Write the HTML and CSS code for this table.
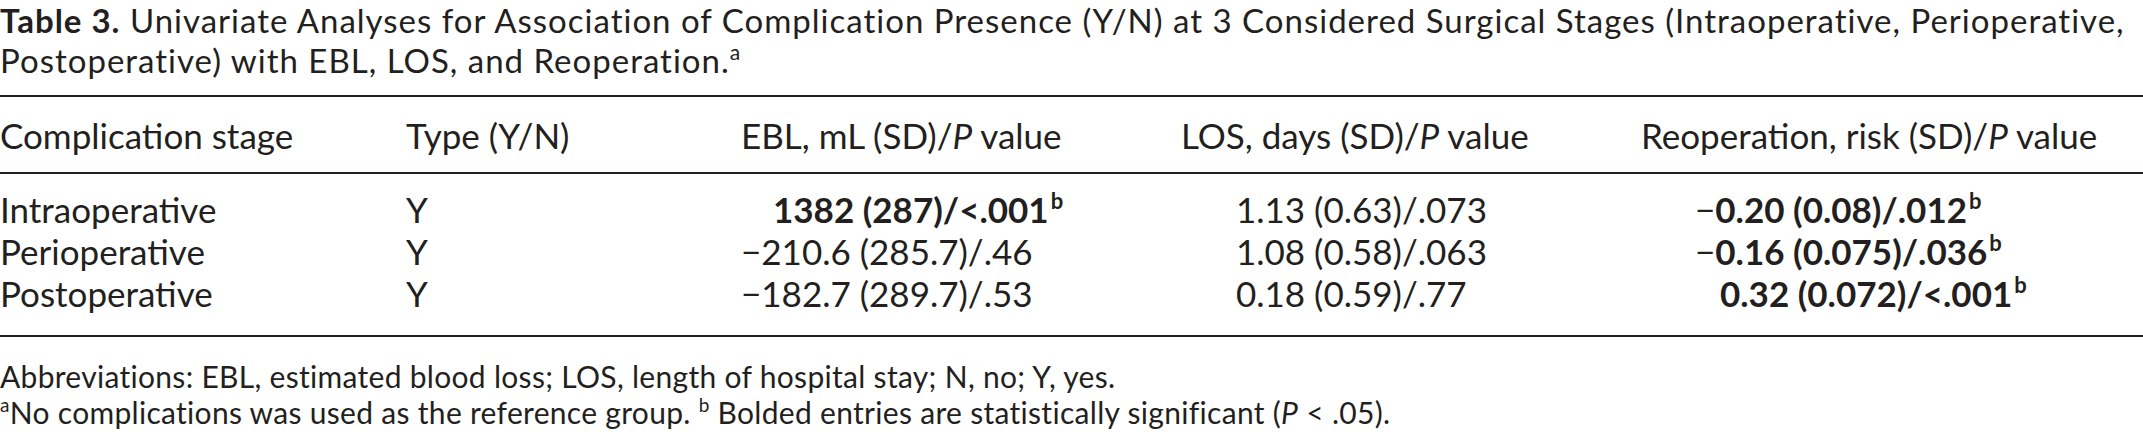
FILE: index.html
```html
<!DOCTYPE html>
<html lang="en">
<head>
<meta charset="utf-8">
<title>Table 3</title>
<link rel="stylesheet" href="styles.css">
</head>
<body>
<div class="page">
  <p class="caption"><span class="label">Table 3.</span> Univariate Analyses for Association of Complication Presence (Y/N) at 3 Considered Surgical Stages (Intraoperative, Perioperative,<br>Postoperative) with EBL, LOS, and Reoperation.<sup class="cap-sup">a</sup></p>
  <table class="data">
    <colgroup>
      <col class="c1"><col class="c2"><col class="c3"><col class="c4"><col class="c5">
    </colgroup>
    <thead>
      <tr>
        <th>Complication stage</th>
        <th>Type (Y/N)</th>
        <th>EBL, mL (SD)/<i>P</i> value</th>
        <th>LOS, days (SD)/<i>P</i> value</th>
        <th>Reoperation, risk (SD)/<i>P</i> value</th>
      </tr>
    </thead>
    <tbody>
      <tr>
        <td>Intraoperative</td>
        <td>Y</td>
        <td><span class="ind-ebl"><b>1382 (287)/&lt;.001</b><sup>b</sup></span></td>
        <td><span class="ind-los">1.13 (0.63)/.073</span></td>
        <td><span class="ind-reo">&minus;<b>0.20 (0.08)/.012</b><sup>b</sup></span></td>
      </tr>
      <tr>
        <td>Perioperative</td>
        <td>Y</td>
        <td>&minus;210.6 (285.7)/.46</td>
        <td><span class="ind-los">1.08 (0.58)/.063</span></td>
        <td><span class="ind-reo">&minus;<b>0.16 (0.075)/.036</b><sup>b</sup></span></td>
      </tr>
      <tr>
        <td>Postoperative</td>
        <td>Y</td>
        <td>&minus;182.7 (289.7)/.53</td>
        <td><span class="ind-los">0.18 (0.59)/.77</span></td>
        <td><span class="ind-pos"><b>0.32 (0.072)/&lt;.001</b><sup>b</sup></span></td>
      </tr>
    </tbody>
  </table>
  <div class="notes">
    <p>Abbreviations: EBL, estimated blood loss; LOS, length of hospital stay; N, no; Y, yes.</p>
    <p><sup>a</sup>No complications was used as the reference group. <sup>b</sup> Bolded entries are statistically significant (<i>P</i> &lt; .05).</p>
  </div>
</div>
</body>
</html>
```

FILE: styles.css
```css
html, body {
  margin: 0;
  padding: 0;
  background: #ffffff;
}

body {
  font-family: "Lato", "Open Sans", sans-serif;
  color: #231f20;
  font-size: 35px;
}

.page {
  width: 2143px;
  overflow: hidden;
}

.caption {
  margin: 0;
  line-height: 40px;
  font-size: 33px;
  letter-spacing: 1px;
  white-space: nowrap;
}

.caption .label {
  font-weight: 700;
}

.cap-sup {
  font-size: 21px;
  vertical-align: 13px;
  line-height: 0;
}

.data {
  width: 100%;
  border-collapse: collapse;
  table-layout: fixed;
  margin-top: 15px;
  border-top: 2px solid #231f20;
  border-bottom: 2px solid #231f20;
}

.c1 { width: 406px; }
.c2 { width: 335px; }
.c3 { width: 440px; }
.c4 { width: 460px; }
.c5 { width: auto; }

.data th {
  font-weight: 400;
  text-align: left;
  padding: 0;
  height: 75px;
  line-height: 42px;
  border-bottom: 2px solid #231f20;
  white-space: nowrap;
}

.data td {
  padding: 0;
  height: 42px;
  line-height: 42px;
  white-space: nowrap;
}

.data tbody tr:first-child td {
  padding-top: 14px;
}

.data tbody tr:last-child td {
  padding-bottom: 21px;
}

.data b {
  font-weight: 700;
}

.data sup {
  font-size: 22px;
  vertical-align: 14px;
  line-height: 0;
  font-weight: 700;
  margin-left: 2px;
}

.ind-ebl { padding-left: 32px; }
.ind-los { padding-left: 55px; }
.ind-reo { padding-left: 54px; }
.ind-pos { padding-left: 79px; }

.notes {
  margin-top: 21px;
}

.notes p {
  margin: 0;
  line-height: 36px;
  font-size: 30px;
  letter-spacing: 0.3px;
  white-space: nowrap;
}

.notes sup {
  font-size: 19px;
  vertical-align: 12px;
  line-height: 0;
}
```
